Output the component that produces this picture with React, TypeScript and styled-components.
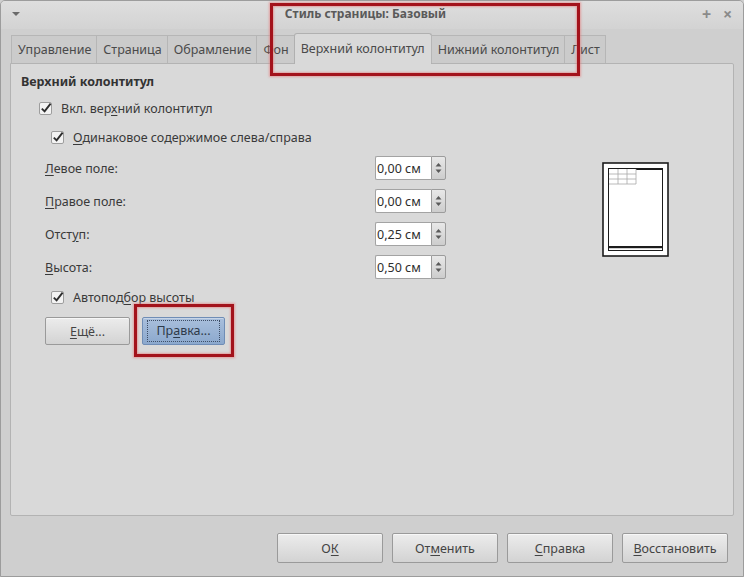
import React from "react";
import styled, { createGlobalStyle, css } from "styled-components";

const GlobalStyle = createGlobalStyle`
  html, body {
    margin: 0;
    padding: 0;
    background: #cfcfcf;
  }
  body {
    font-family: "Noto Sans", "Open Sans", sans-serif;
    font-size: 12.5px;
    color: #3c3c3c;
  }
`;

const TABS = [
  "Управление",
  "Страница",
  "Обрамление",
  "Фон",
  "Верхний колонтитул",
  "Нижний колонтитул",
  "Лист",
];
const ACTIVE_TAB = "Верхний колонтитул";

const FIELDS = [
  { pre: "", key: "Л", post: "евое поле:", value: "0,00 см" },
  { pre: "", key: "П", post: "равое поле:", value: "0,00 см" },
  { pre: "Отст", key: "у", post: "п:", value: "0,25 см" },
  { pre: "", key: "В", post: "ысота:", value: "0,50 см" },
];

const FOOTER = [
  { pre: "О", key: "К", post: "" },
  { pre: "От", key: "м", post: "енить" },
  { pre: "", key: "С", post: "правка" },
  { pre: "", key: "В", post: "осстановить" },
];

const Mnemonic = ({ pre, k, post }: { pre: string; k: string; post: string }) => (
  <>
    {pre}
    <U>{k}</U>
    {post}
  </>
);

const CheckIcon = () => (
  <svg width="14" height="14" viewBox="0 0 14 14">
    <rect x="0.5" y="1.5" width="12" height="12" rx="1.5" fill="#f3f3f3" stroke="#9d9d9d" />
    <path d="M2.8 7.6 L5.6 10.4 L11.6 2.6" fill="none" stroke="#2e2e2e" strokeWidth="1.9" />
  </svg>
);

const SpinArrows = () => (
  <svg width="7" height="12" viewBox="0 0 7 12">
    <path d="M0.5 4.5 L3.5 1 L6.5 4.5 Z" fill="#5a5a5a" />
    <path d="M0.5 7.5 L3.5 11 L6.5 7.5 Z" fill="#5a5a5a" />
  </svg>
);

const PagePreview = () => (
  <svg width="68" height="96" viewBox="0 0 68 96">
    <rect x="1" y="1" width="65" height="93" fill="#ffffff" stroke="#1c1c1c" strokeWidth="1.6" />
    <line x1="6.5" y1="6" x2="6.5" y2="88" stroke="#1c1c1c" strokeWidth="1" />
    <line x1="60.5" y1="6" x2="60.5" y2="88" stroke="#1c1c1c" strokeWidth="1" />
    <line x1="6" y1="6.5" x2="61" y2="6.5" stroke="#1c1c1c" strokeWidth="1" />
    <rect x="34" y="6" width="27" height="2" fill="#1c1c1c" />
    <g stroke="#a8a8a8" strokeWidth="0.8" fill="none">
      <line x1="7" y1="12" x2="34" y2="12" />
      <line x1="7" y1="17" x2="34" y2="17" />
      <line x1="7" y1="22" x2="34" y2="22" />
      <line x1="16" y1="7" x2="16" y2="22" />
      <line x1="25" y1="7" x2="25" y2="22" />
      <line x1="34" y1="7" x2="34" y2="22" />
    </g>
    <rect x="6" y="84" width="55" height="2.2" fill="#1c1c1c" />
    <line x1="6" y1="88.5" x2="61" y2="88.5" stroke="#1c1c1c" strokeWidth="1" />
  </svg>
);

export default function App() {
  return (
    <>
      <GlobalStyle />
      <Window>
        <TitleBar>
          <MenuArrow />
          <Title>Стиль страницы: Базовый</Title>
          <TitleControls>
            <TitleGlyph>+</TitleGlyph>
            <TitleGlyph>×</TitleGlyph>
          </TitleControls>
        </TitleBar>

        <Body>
          <TabRow>
            {TABS.map((t) => (
              <Tab key={t} active={t === ACTIVE_TAB}>
                {t}
              </Tab>
            ))}
          </TabRow>

          <Panel>
            <Heading>Верхний колонтитул</Heading>

            <CheckRow indent={18}>
              <CheckIcon />
              <span>
                <Mnemonic pre="Вкл. вер" k="х" post="ний колонтитул" />
              </span>
            </CheckRow>

            <CheckRow indent={30} gap={9}>
              <CheckIcon />
              <span>
                <Mnemonic pre="" k="О" post="динаковое содержимое слева/справа" />
              </span>
            </CheckRow>

            <FieldsArea>
              <FieldGrid>
                {FIELDS.map((f) => (
                  <React.Fragment key={f.value + f.post}>
                    <FieldLabel>
                      <Mnemonic pre={f.pre} k={f.key} post={f.post} />
                    </FieldLabel>
                    <Spin>
                      <SpinInput>{f.value}</SpinInput>
                      <SpinButton>
                        <SpinArrows />
                      </SpinButton>
                    </Spin>
                  </React.Fragment>
                ))}
              </FieldGrid>
              <PreviewBox>
                <PagePreview />
              </PreviewBox>
            </FieldsArea>

            <CheckRow indent={30} gap={8}>
              <CheckIcon />
              <span>
                <Mnemonic pre="Автопод" k="б" post="ор высоты" />
              </span>
            </CheckRow>

            <ButtonRow>
              <Button width={85}>
                <Mnemonic pre="" k="Е" post="щё..." />
              </Button>
              <Button width={83} primary>
                <FocusRing>
                  <Mnemonic pre="Пр" k="а" post="вка..." />
                </FocusRing>
              </Button>
            </ButtonRow>
          </Panel>

          <Footer>
            {FOOTER.map((b) => (
              <Button key={b.post + b.key} width={106} tall>
                <Mnemonic pre={b.pre} k={b.key} post={b.post} />
              </Button>
            ))}
          </Footer>
        </Body>

        <Annotation style={{ left: 269, top: 2, width: 310, height: 73 }} />
        <Annotation style={{ left: 133, top: 303, width: 100, height: 53 }} />
      </Window>
    </>
  );
}

const Window = styled.div`
  position: relative;
  box-sizing: border-box;
  width: 744px;
  height: 577px;
  border: 1px solid #9c9c9c;
  border-radius: 5px 5px 0 0;
  background: #cfcfcf;
  display: flex;
  flex-direction: column;
  overflow: hidden;
`;

const TitleBar = styled.div`
  height: 28px;
  flex-shrink: 0;
  display: flex;
  align-items: center;
  position: relative;
  background: linear-gradient(#dedede, #d3d3d3);
  padding: 0 10px 0 11px;
`;

const MenuArrow = styled.span`
  width: 0;
  height: 0;
  border-left: 4px solid transparent;
  border-right: 4px solid transparent;
  border-top: 4px solid #6a6a6a;
  margin-top: -3px;
`;

const Title = styled.div`
  flex: 1;
  text-align: center;
  font-weight: bold;
  color: #5a5a5a;
  font-size: 12px;
  margin-top: -3px;
  padding-left: 10px;
`;

const TitleControls = styled.div`
  display: flex;
  gap: 10px;
  margin-top: -2px;
`;

const TitleGlyph = styled.span`
  color: #8a8a8a;
  font-size: 16px;
  font-weight: bold;
  width: 11px;
  text-align: center;
`;

const Body = styled.div`
  flex: 1;
  display: flex;
  flex-direction: column;
  padding: 0 9px;
`;

const TabRow = styled.div`
  display: flex;
  align-items: flex-end;
  height: 34px;
  margin-left: 2px;
  position: relative;
  z-index: 1;
`;

const Tab = styled.div<{ active?: boolean }>`
  box-sizing: border-box;
  height: 28px;
  padding: 0 5px 0 6px;
  display: flex;
  align-items: center;
  color: #4a4a4a;
  background: #cbcbcb;
  border: 1px solid #b6b6b6;
  border-bottom: none;
  margin-left: -1px;
  margin-bottom: 0;
  white-space: nowrap;

  ${({ active }) =>
    active &&
    css`
      height: 31px;
      background: #d9d9d9;
      border-color: #b0b0b0;
      border-radius: 3px 3px 0 0;
      margin-bottom: -1px;
      padding: 0 6px 2px 6px;
    `}
`;

const Panel = styled.div`
  box-sizing: border-box;
  height: 453px;
  background: #d9d9d9;
  border: 1px solid #b3b3b3;
  border-radius: 0 2px 2px 2px;
  padding: 9px 10px 0 10px;
  display: flex;
  flex-direction: column;
  align-items: flex-start;
`;

const Heading = styled.div`
  font-weight: bold;
  color: #333;
  line-height: 18px;
`;

const CheckRow = styled.div<{ indent: number; gap?: number }>`
  display: flex;
  align-items: center;
  gap: 8px;
  height: 20px;
  margin-left: ${({ indent }) => indent}px;
  margin-top: ${({ gap }) => gap ?? 7}px;
  color: #3a3a3a;
`;

const U = styled.span`
  text-decoration: underline;
  text-underline-offset: 2px;
`;

const FieldsArea = styled.div`
  display: flex;
  margin-top: 9px;
  margin-left: 24px;
`;

const FieldGrid = styled.div`
  display: grid;
  grid-template-columns: 330px 71px;
  row-gap: 9px;
  align-items: center;
`;

const FieldLabel = styled.div`
  color: #3a3a3a;
`;

const Spin = styled.div`
  display: flex;
  height: 24px;
`;

const SpinInput = styled.div`
  box-sizing: border-box;
  width: 56px;
  height: 24px;
  background: #ffffff;
  border: 1px solid #a3a3a3;
  border-right: none;
  border-radius: 2px 0 0 2px;
  padding-left: 1px;
  display: flex;
  align-items: center;
  color: #2e2e2e;
`;

const SpinButton = styled.div`
  box-sizing: border-box;
  width: 15px;
  height: 24px;
  border: 1px solid #9c9c9c;
  border-radius: 0 2px 2px 0;
  background: linear-gradient(#e8e8e8, #cdcdcd);
  display: flex;
  align-items: center;
  justify-content: center;
`;

const PreviewBox = styled.div`
  margin-left: 156px;
  margin-top: 6px;
  line-height: 0;
`;

const ButtonRow = styled.div`
  display: flex;
  gap: 12px;
  margin-top: 10px;
  margin-left: 24px;
`;

const Button = styled.div<{ width: number; primary?: boolean; tall?: boolean }>`
  box-sizing: border-box;
  width: ${({ width }) => width}px;
  height: ${({ tall }) => (tall ? 30 : 28)}px;
  display: flex;
  align-items: center;
  justify-content: center;
  border: 1px solid #9a9a9a;
  border-radius: 2px;
  background: linear-gradient(#ececec, #d3d3d3);
  color: #444;
  box-shadow: inset 0 1px 0 rgba(255, 255, 255, 0.6);

  ${({ primary }) =>
    primary &&
    css`
      background: linear-gradient(#a9bfdc, #8ba8cd);
      border-color: #6f8db6;
      color: #2e3a4a;
      box-shadow: inset 0 1px 0 rgba(255, 255, 255, 0.35);
    `}
`;

const FocusRing = styled.span`
  border: 1px dotted #3e4e66;
  padding: 3px 8px;
  line-height: 14px;
`;

const Footer = styled.div`
  flex: 1;
  display: flex;
  justify-content: flex-end;
  align-items: flex-start;
  gap: 9px;
  padding-top: 17px;
  padding-right: 6px;
`;

const Annotation = styled.div`
  position: absolute;
  box-sizing: border-box;
  border: 3px solid #a3121b;
  box-shadow: 0 0 2px 1px rgba(230, 120, 120, 0.6),
    inset 0 0 2px 1px rgba(230, 120, 120, 0.6);
  pointer-events: none;
  z-index: 5;
`;
